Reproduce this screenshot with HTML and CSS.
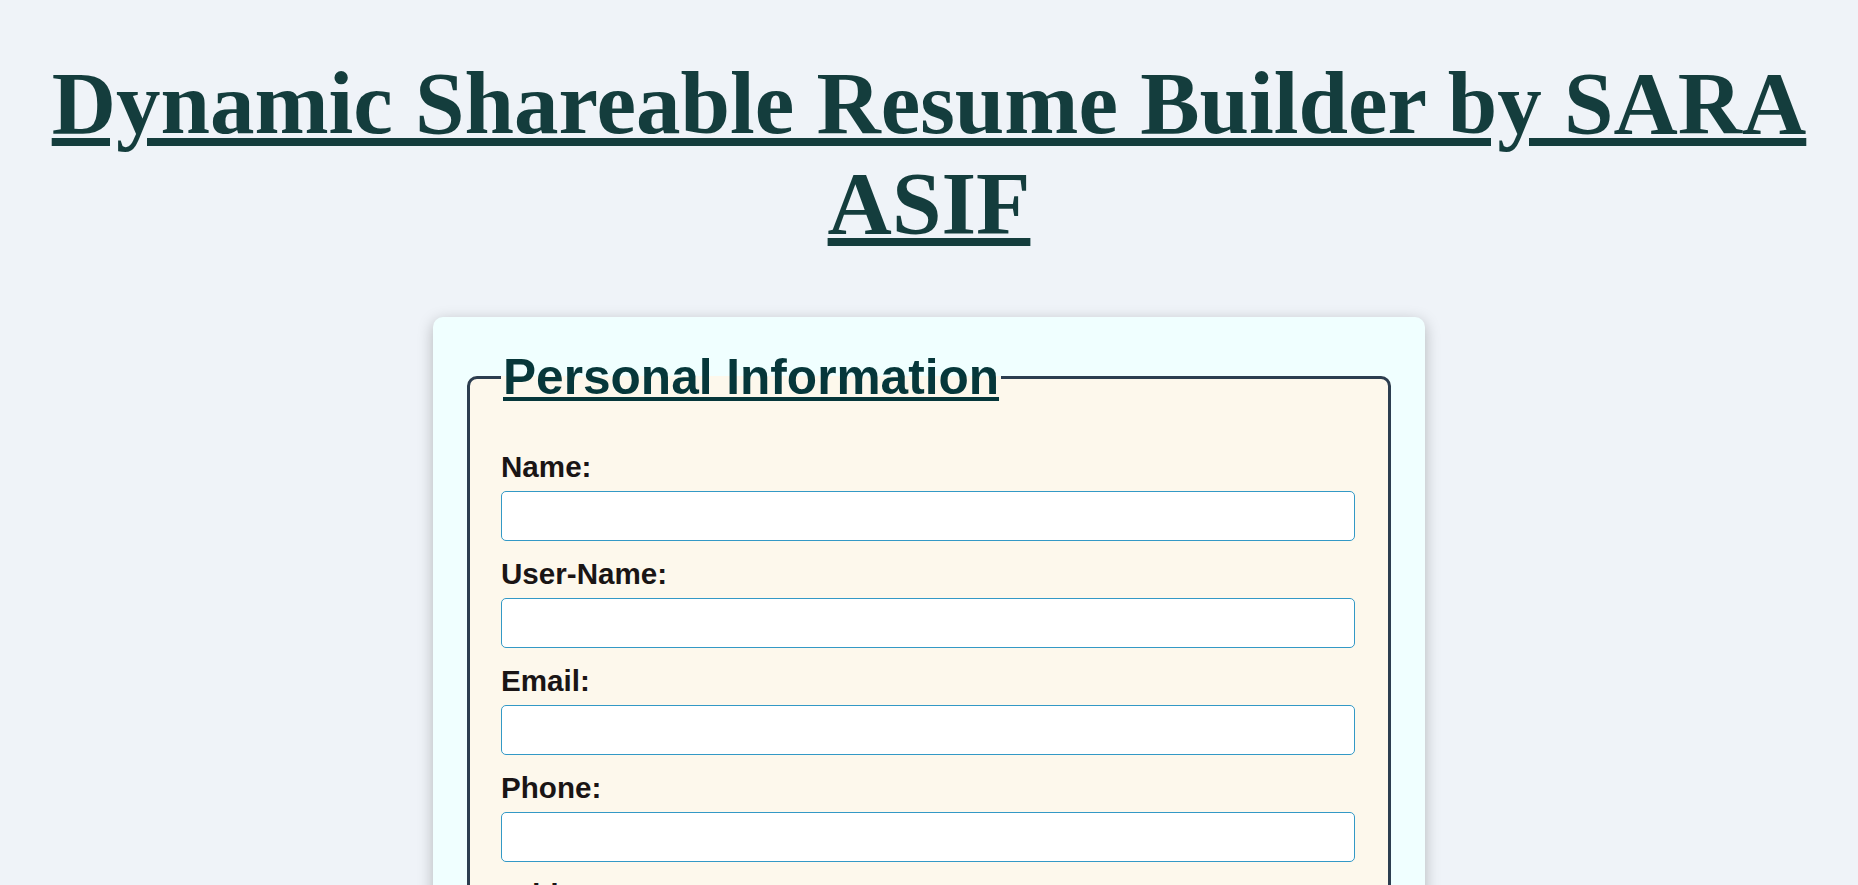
FILE: index.html
```html
<!DOCTYPE html>
<html lang="en">
<head>
<meta charset="UTF-8">
<title>Dynamic Shareable Resume Builder</title>
<link rel="stylesheet" href="styles.css">
</head>
<body>
  <h1 class="page-title">Dynamic Shareable Resume Builder by SARA ASIF</h1>
  <form class="card">
    <fieldset class="section">
      <legend class="section-title">Personal Information</legend>
      <label class="field-label" for="name">Name:</label>
      <input class="field-input" type="text" id="name">
      <label class="field-label" for="username">User-Name:</label>
      <input class="field-input" type="text" id="username">
      <label class="field-label" for="email">Email:</label>
      <input class="field-input" type="email" id="email">
      <label class="field-label" for="phone">Phone:</label>
      <input class="field-input" type="tel" id="phone">
      <label class="field-label" for="address">Address:</label>
      <input class="field-input" type="text" id="address">
    </fieldset>
    <fieldset class="section">
      <legend class="section-title">Education</legend>
      <label class="field-label" for="degree">Degree:</label>
      <input class="field-input" type="text" id="degree">
      <label class="field-label" for="school">School:</label>
      <input class="field-input" type="text" id="school">
    </fieldset>
  </form>
</body>
</html>
```

FILE: styles.css
```css
html, body {
  background: #eff3f8;
}

body {
  margin: 0;
  padding: 53px 0 40px;
}

.page-title {
  margin: 0 0 64px;
  font-family: "Liberation Serif", "Times New Roman", serif;
  font-weight: bold;
  font-size: 89px;
  line-height: 100px;
  color: #143d3d;
  text-align: center;
  text-decoration: underline;
  text-decoration-thickness: 8px;
  text-underline-offset: 5px;
}

.card {
  width: 928px;
  margin: 0 auto;
  padding: 32px;
  background: #f0ffff;
  border-radius: 10px;
  box-shadow: 0 4px 15px rgba(0, 0, 0, 0.25);
  font-family: "Liberation Sans", Arial, sans-serif;
}

.section {
  margin: 0 2px 32px;
  padding: 45px 33px 20px 31px;
  border: 3px solid #2c3e50;
  border-radius: 10px;
  background: #fdf8ec;
}

.section-title {
  padding: 0 2px;
  font-size: 49.6px;
  line-height: 56px;
  font-weight: bold;
  color: #06373a;
  text-decoration: underline;
}

.field-label {
  display: block;
  margin-bottom: 8px;
  font-size: 29.6px;
  line-height: 33px;
  font-weight: bold;
  color: #1a1515;
}

.field-input {
  display: block;
  box-sizing: border-box;
  width: 100%;
  height: 50px;
  margin: 0 0 16px;
  padding: 10px;
  border: 1px solid #3399c6;
  border-radius: 5px;
  background: #ffffff;
  font-family: "Liberation Sans", Arial, sans-serif;
  font-size: 16px;
}
```
